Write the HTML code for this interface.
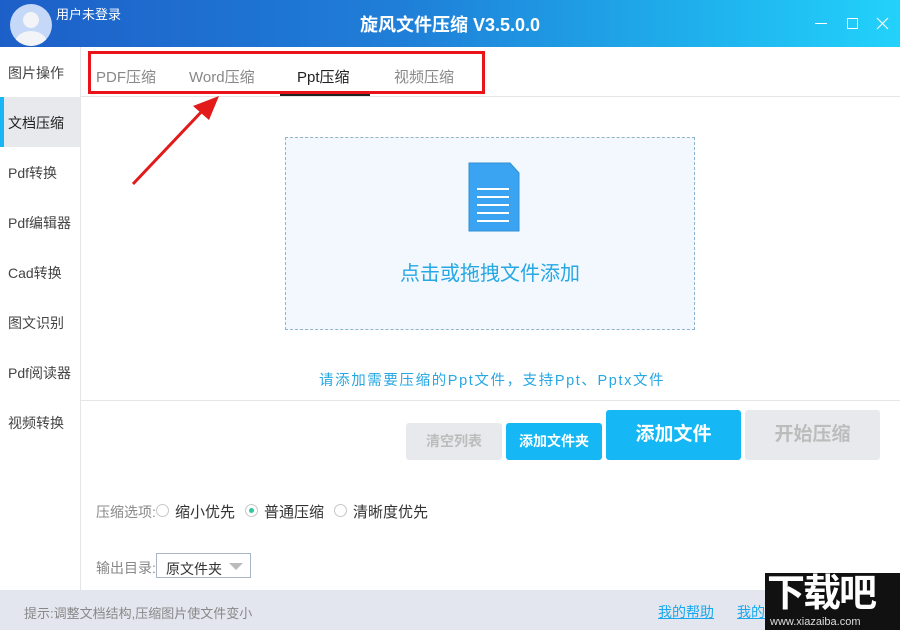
<!DOCTYPE html>
<html><head><meta charset="utf-8"><style>
*{margin:0;padding:0;box-sizing:border-box}
body{width:900px;height:630px;position:relative;overflow:hidden;background:#fff;font-family:"Liberation Sans","Noto Sans CJK SC",sans-serif;}
.a{position:absolute}
.title{left:0;top:0;width:900px;height:47px;background:linear-gradient(90deg,#1d5fc8 0%,#1f7fd8 45%,#1fb4ee 80%,#22d2fb 100%)}
.side div{position:absolute;left:8px;font-size:14px;color:#444}
.btn{position:absolute;border-radius:3px;text-align:center;font-weight:bold}
</style></head><body>
<div class="a title"></div>
<div class="a" style="left:10px;top:4px;width:42px;height:42px;border-radius:50%;background:#c5d8f7;overflow:hidden">
 <div class="a" style="left:13px;top:8px;width:16px;height:16px;border-radius:50%;background:#f2f4f7"></div>
 <div class="a" style="left:5px;top:27px;width:32px;height:24px;border-radius:50%;background:#f2f4f7"></div>
</div>
<div class="a" style="left:56px;top:4px;color:#fff;font-size:13px">用户未登录</div>
<div class="a" style="left:0;width:900px;top:11px;text-align:center;color:#fff;font-size:18px;font-weight:bold">旋风文件压缩 V3.5.0.0</div>
<div class="a" style="left:815px;top:23px;width:12px;height:1px;background:#fff"></div>
<div class="a" style="left:847px;top:18px;width:11px;height:11px;border:1px solid #fff"></div>
<svg class="a" style="left:876px;top:17px" width="13" height="13"><path d="M1 1L12 12M12 1L1 12" stroke="#fff" stroke-width="1.2"/></svg>

<div class="a" style="left:80px;top:47px;width:1px;height:543px;background:#e3e5e8"></div>
<div class="a" style="left:0;top:97px;width:80px;height:50px;background:#e8e9ec"></div>
<div class="a" style="left:0;top:97px;width:4px;height:50px;background:#18b6f5"></div>
<div class="side">
<div style="top:63px">图片操作</div><div style="top:113px;color:#222">文档压缩</div>
<div style="top:163px">Pdf转换</div><div style="top:213px">Pdf编辑器</div>
<div style="top:263px">Cad转换</div><div style="top:313px">图文识别</div>
<div style="top:363px">Pdf阅读器</div><div style="top:413px">视频转换</div>
</div>

<div class="a" style="left:81px;top:96px;width:819px;height:1px;background:#e6e6e6"></div>
<div class="a" style="left:96px;top:66px;font-size:15px;color:#888">PDF压缩</div>
<div class="a" style="left:189px;top:66px;font-size:15px;color:#888">Word压缩</div>
<div class="a" style="left:297px;top:66px;font-size:15px;color:#222">Ppt压缩</div>
<div class="a" style="left:394px;top:66px;font-size:15px;color:#888">视频压缩</div>
<div class="a" style="left:280px;top:93px;width:90px;height:3px;background:#222"></div>
<div class="a" style="left:88px;top:51px;width:397px;height:43px;border:3px solid #e8141a"></div>
<svg class="a" style="left:125px;top:92px" width="100" height="100"><line x1="8" y1="92" x2="80" y2="16" stroke="#e21a1a" stroke-width="3"/><path d="M94 4L68 14L84 28Z" fill="#e21a1a"/></svg>

<div class="a" style="left:285px;top:137px;width:410px;height:193px;border:1px dashed #8fb4cf;background:#f2f8fe"></div>
<svg class="a" style="left:468px;top:162px" width="52" height="70"><path d="M1 1H42L51 11V69H1Z" fill="#3ba4f2" stroke="#2f90d4"/><g stroke="#fff" stroke-width="2"><line x1="9" y1="27" x2="41" y2="27"/><line x1="9" y1="35" x2="41" y2="35"/><line x1="9" y1="43" x2="41" y2="43"/><line x1="9" y1="51" x2="41" y2="51"/><line x1="9" y1="59" x2="41" y2="59"/></g></svg>
<div class="a" style="left:285px;width:410px;top:257px;text-align:center;font-size:20px;color:#27a7e4">点击或拖拽文件添加</div>
<div class="a" style="left:319px;top:369px;font-size:14.5px;letter-spacing:1.6px;color:#27a7e4;white-space:nowrap">请添加需要压缩的Ppt文件，支持Ppt、Pptx文件</div>
<div class="a" style="left:81px;top:400px;width:819px;height:1px;background:#e6e6e6"></div>

<div class="btn" style="left:406px;top:423px;width:96px;height:37px;background:#e8e9ec;color:#bcbcbc;font-size:14px;line-height:37px">清空列表</div>
<div class="btn" style="left:506px;top:423px;width:96px;height:37px;background:#15b8f5;color:#fff;font-size:14px;line-height:37px">添加文件夹</div>
<div class="btn" style="left:606px;top:410px;width:135px;height:50px;background:#15b8f5;color:#fff;font-size:19px;line-height:50px">添加文件</div>
<div class="btn" style="left:745px;top:410px;width:135px;height:50px;background:#e8e9ec;color:#bcbcbc;font-size:19px;line-height:50px">开始压缩</div>

<div class="a" style="left:96px;top:502px;font-size:14px;color:#888">压缩选项:</div>
<div class="a" style="left:156px;top:504px;width:13px;height:13px;border:1px solid #c8c8c8;border-radius:50%"></div>
<div class="a" style="left:175px;top:501px;font-size:15px;color:#333">缩小优先</div>
<div class="a" style="left:245px;top:504px;width:13px;height:13px;border:1px solid #c8c8c8;border-radius:50%"><div class="a" style="left:3px;top:3px;width:5px;height:5px;border-radius:50%;background:#2ec7a6"></div></div>
<div class="a" style="left:264px;top:501px;font-size:15px;color:#333">普通压缩</div>
<div class="a" style="left:334px;top:504px;width:13px;height:13px;border:1px solid #c8c8c8;border-radius:50%"></div>
<div class="a" style="left:353px;top:501px;font-size:15px;color:#333">清晰度优先</div>

<div class="a" style="left:96px;top:558px;font-size:14px;color:#888">输出目录:</div>
<div class="a" style="left:156px;top:553px;width:95px;height:25px;border:1px solid #a9b4c4;font-size:14px;color:#333;padding:5px 0 0 9px">原文件夹</div>
<svg class="a" style="left:229px;top:563px" width="14" height="7"><path d="M0 0H14L7 7Z" fill="#bbb"/></svg>

<div class="a" style="left:0;top:590px;width:900px;height:40px;background:#e3e6ee"></div>
<div class="a" style="left:24px;top:603px;font-size:13px;color:#888">提示:调整文档结构,压缩图片使文件变小</div>
<div class="a" style="left:658px;top:602px;font-size:14px;color:#18a8ef;text-decoration:underline">我的帮助</div>
<div class="a" style="left:737px;top:602px;font-size:14px;color:#18a8ef;text-decoration:underline">我的</div>
<div class="a" style="left:765px;top:573px;width:135px;height:57px;background:#111"></div>
<div class="a" style="left:767px;top:572px;font-size:38px;font-weight:bold;color:#fff;letter-spacing:-2px;line-height:44px">下载吧</div>
<div class="a" style="left:770px;top:616px;font-size:11px;color:#ddd">www.xiazaiba.com</div>
</body></html>
